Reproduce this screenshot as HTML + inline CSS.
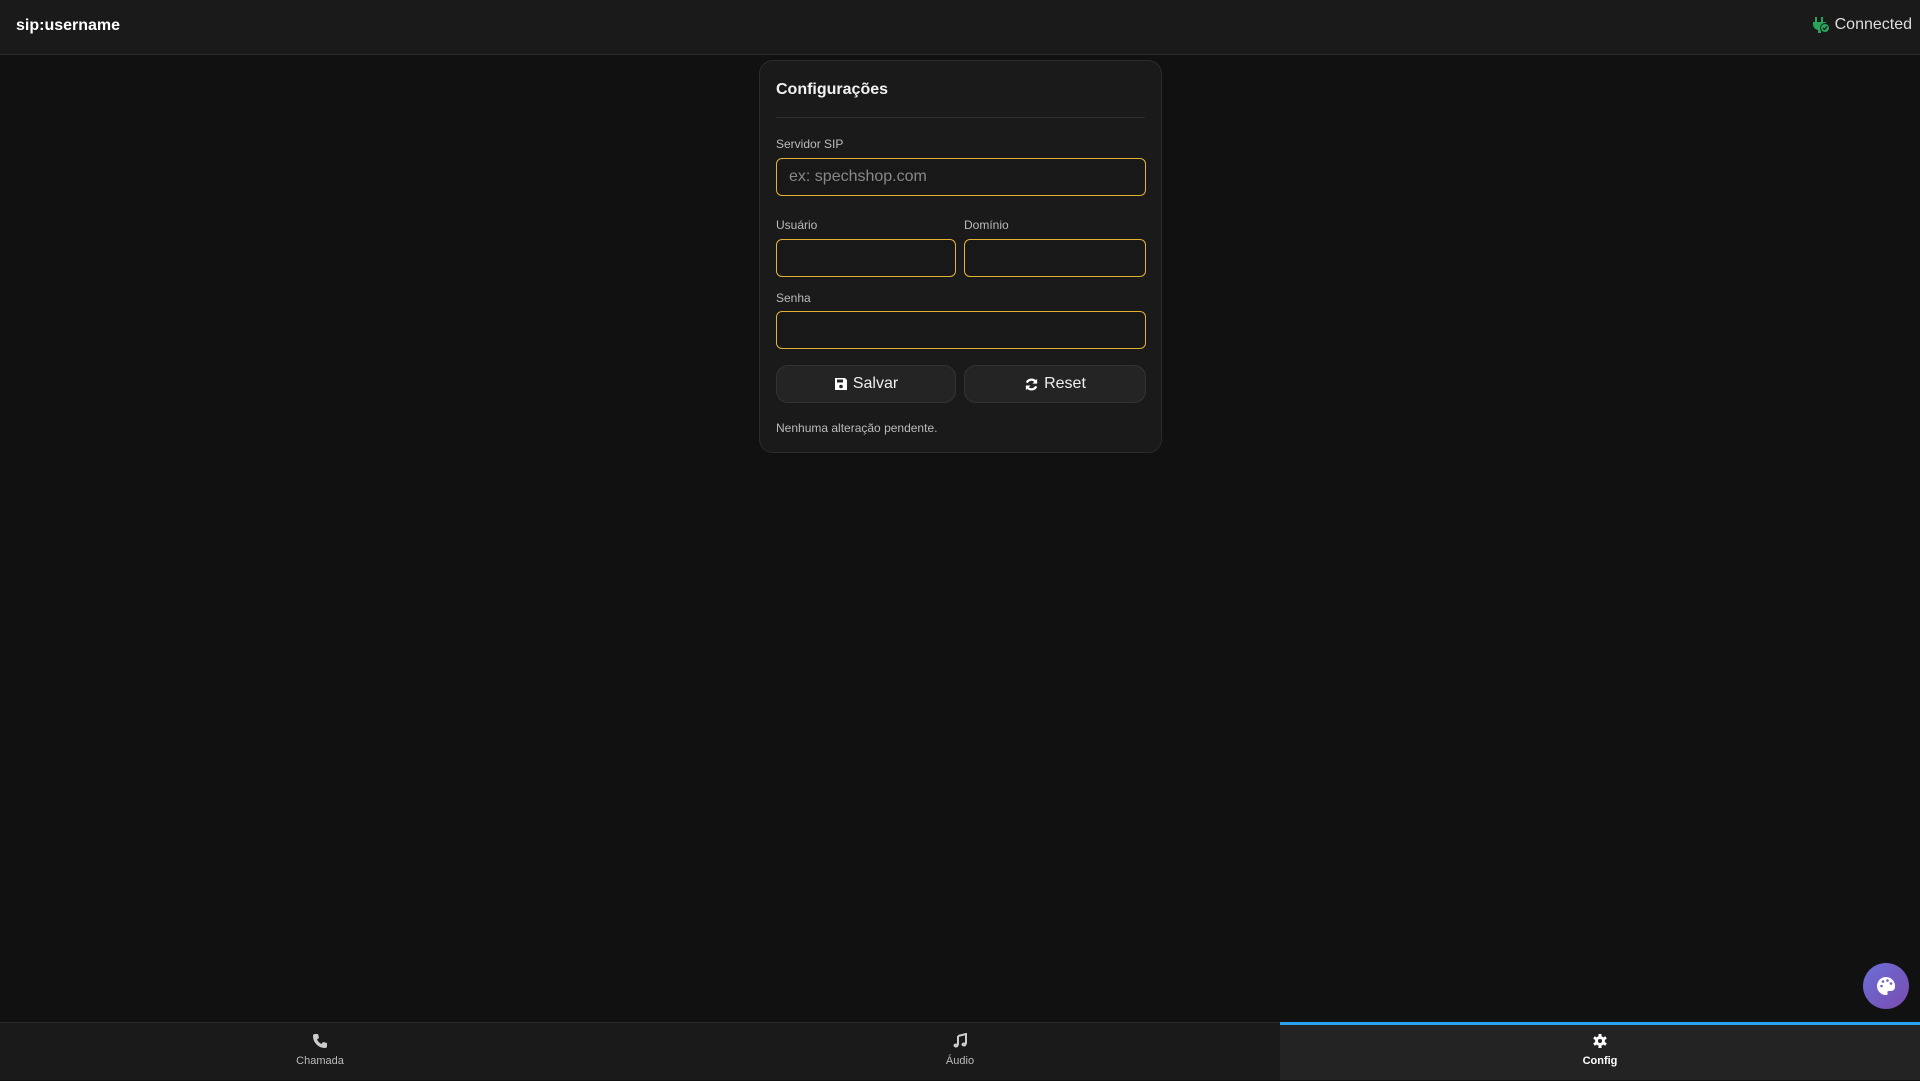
<!DOCTYPE html>
<html><head><meta charset="utf-8"><style>
*{box-sizing:border-box;margin:0;padding:0}
body{width:1920px;height:1080px;background:#111;font-family:"Liberation Sans",sans-serif;color:#eee;position:relative;overflow:hidden}
.hdr{position:absolute;left:0;top:0;width:1920px;height:55px;background:#1a1a1a;border-bottom:1px solid #2b2b2b}
.hdr .t{position:absolute;left:16px;top:17px;font-weight:bold;font-size:16px;color:#fff}
.hdr .c{position:absolute;right:8px;top:16px;font-size:16px;color:#ddd;display:flex;align-items:center;gap:5px}
.card{position:absolute;left:759px;top:60px;width:403px;height:393px;background:#1a1a1a;border:1px solid #2c2c2c;border-radius:14px}
.card h2{position:absolute;left:16px;top:20px;font-size:16px;font-weight:bold;color:#f2f2f2}
.sep{position:absolute;left:16px;right:16px;top:56px;height:1px;background:#2e2e2e}
.lbl{position:absolute;font-size:12px;color:#bbb}
.in{position:absolute;height:38px;border:1.5px solid #e4b233;border-radius:6px;background:#181818;font-size:16px;color:#888;padding:9px 12px}
.btn{position:absolute;top:304px;height:38px;width:180px;background:#242424;border:1px solid #333;border-radius:12px;font-size:16px;color:#eee;display:flex;align-items:center;justify-content:center;gap:5px}
.st{position:absolute;left:16px;top:360px;font-size:12px;color:#bbb}
.nav{position:absolute;left:0;top:1022px;width:1920px;height:58px;background:#1a1a1a;border-top:1px solid #2a2a2a}
.tab{position:absolute;top:0;width:640px;height:58px;text-align:center;font-size:11px;color:#bbb}
.tab svg{display:block;margin:10px auto 6px}
.act{background:#232323;border-top:3px solid #2aa3ef;top:-1px;color:#fff;font-weight:bold}
.pal{position:absolute;left:1863px;top:963px;width:46px;height:46px;border-radius:50%;background:linear-gradient(135deg,#6a6fd6,#7a4bb0);display:flex;align-items:center;justify-content:center}
</style></head><body>
<div class="hdr"><div class="t">sip:username</div>
<div class="c"><svg width="18" height="16" viewBox="0 0 18 16"><rect x="3" y="0" width="2" height="5" fill="#27a55a"/><rect x="9" y="0" width="2" height="5" fill="#27a55a"/><path d="M1 5h13v3a6 6 0 0 1-5 5v3h-3v-3a6 6 0 0 1-5-5z" fill="#27a55a"/><circle cx="13" cy="11" r="4.5" fill="#27a55a" stroke="#1a1a1a"/><path d="M11 11l1.5 1.5 2.5-3" stroke="#1a1a1a" stroke-width="1.3" fill="none"/></svg>Connected</div></div>
<div class="card">
<h2>Configurações</h2><div class="sep"></div>
<div class="lbl" style="left:16px;top:76px">Servidor SIP</div>
<div class="in" style="left:16px;top:97px;width:370px">ex: spechshop.com</div>
<div class="lbl" style="left:16px;top:157px">Usuário</div>
<div class="lbl" style="left:204px;top:157px">Domínio</div>
<div class="in" style="left:16px;top:178px;width:180px"></div>
<div class="in" style="left:204px;top:178px;width:182px"></div>
<div class="lbl" style="left:16px;top:230px">Senha</div>
<div class="in" style="left:16px;top:250px;width:370px"></div>
<div class="btn" style="left:16px"><svg width="14" height="14" viewBox="0 0 14 14"><path d="M1 1h10l2 2v10H1z" fill="#fff"/><rect x="3" y="2.5" width="6" height="3" fill="#242424"/><circle cx="7" cy="9.5" r="1.8" fill="#242424"/></svg>Salvar</div>
<div class="btn" style="left:204px;width:182px"><svg width="15" height="15" viewBox="0 0 16 16" fill="none" stroke="#fff" stroke-width="2.4"><path d="M13 6A5.5 5.5 0 0 0 3 6"/><path d="M3 10a5.5 5.5 0 0 0 10 0"/><path d="M14 2v5h-5z" fill="#fff" stroke="none"/><path d="M2 14V9h5z" fill="#fff" stroke="none"/></svg>Reset</div>
<div class="st">Nenhuma alteração pendente.</div>
</div>
<div class="nav">
<div class="tab" style="left:0"><svg width="16" height="16" viewBox="0 0 16 16"><path d="M3 1l3 0 1 4-2 1.5a9 9 0 0 0 4.5 4.5L11 9l4 1v3a2 2 0 0 1-2 2A12 12 0 0 1 1 3a2 2 0 0 1 2-2z" fill="#ccc"/></svg>Chamada</div>
<div class="tab" style="left:640px"><svg width="16" height="16" viewBox="0 0 16 16"><path d="M6 3l8-2v10" stroke="#ccc" stroke-width="2" fill="none"/><path d="M6 3v9" stroke="#ccc" stroke-width="2"/><ellipse cx="4" cy="12.5" rx="2.5" ry="2" fill="#ccc"/><ellipse cx="12" cy="11.5" rx="2.5" ry="2" fill="#ccc"/></svg>Áudio</div>
<div class="tab act" style="left:1280px"><svg width="16" height="16" viewBox="0 0 16 16" style="margin-top:8px"><g fill="#fff"><circle cx="8" cy="8" r="5"/><rect x="6.5" y="1" width="3" height="14"/><rect x="6.5" y="1" width="3" height="14" transform="rotate(60 8 8)"/><rect x="6.5" y="1" width="3" height="14" transform="rotate(-60 8 8)"/></g><circle cx="8" cy="8" r="2" fill="#232323"/></svg>Config</div>
</div>
<div class="pal"><svg width="20" height="20" viewBox="0 0 20 20"><path d="M10 1a9 9 0 0 0 0 18c1.5 0 2-1 1.5-2s0-2 1.5-2h2a4 4 0 0 0 4-4A9 9 0 0 0 10 1z" fill="#fff"/><g fill="#7060c8"><circle cx="5.5" cy="10" r="1.3"/><circle cx="7" cy="5.5" r="1.3"/><circle cx="11.5" cy="4.5" r="1.3"/><circle cx="15" cy="7.5" r="1.3"/></g></svg></div>
</body></html>
